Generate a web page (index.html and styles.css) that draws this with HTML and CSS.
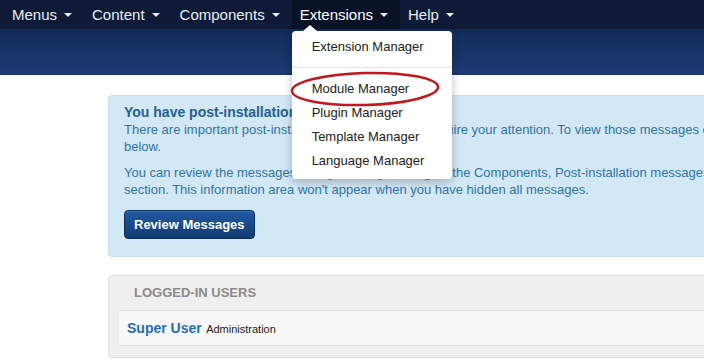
FILE: index.html
```html
<!DOCTYPE html>
<html lang="en">
<head>
    <meta charset="UTF-8">
    <meta name="viewport" content="width=device-width, initial-scale=1.0">
    <title>Control Panel</title>
    <link rel="stylesheet" href="styles.css">
</head>
<body>
    <nav class="navbar">
        <ul class="nav">
            <li><a href="#">Menus <span class="caret"></span></a></li>
            <li><a href="#">Content <span class="caret"></span></a></li>
            <li><a href="#">Components <span class="caret"></span></a></li>
            <li class="open">
                <a href="#">Extensions <span class="caret"></span></a>
                <ul class="dropdown-menu">
                    <li><a href="#">Extension Manager</a></li>
                    <li class="divider"></li>
                    <li><a href="#">Module Manager</a></li>
                    <li><a href="#">Plugin Manager</a></li>
                    <li><a href="#">Template Manager</a></li>
                    <li><a href="#">Language Manager</a></li>
                </ul>
            </li>
            <li><a href="#">Help <span class="caret"></span></a></li>
        </ul>
    </nav>

    <header class="subhead"></header>

    <main class="content">
        <div class="alert-info">
            <h4>You have post-installation messages</h4>
            <p>There are important post-installation messages, that require your attention. To view those messages click on the Review Messages button<br>below.</p>
            <p>You can review the messages at any time, by clicking on the Components, Post-installation messages menu item of your administrator<br>section. This information area won't appear when you have hidden all messages.</p>
            <button class="btn-primary">Review Messages</button>
        </div>

        <div class="well">
            <h2 class="module-title">Logged-in Users</h2>
            <div class="row-user">
                <a href="#" class="user-name">Super User</a>
                <span class="user-client">Administration</span>
            </div>
        </div>
    </main>

    <!-- highlight drawn over the screenshot -->
    <svg class="highlight" width="160" height="44" viewBox="0 0 160 44">
        <ellipse cx="78" cy="21" rx="73" ry="16" fill="none" stroke="#c4161c" stroke-width="2.5" transform="rotate(-1.5 78 21)"/>
    </svg>
</body>
</html>
```

FILE: styles.css
```css
body {
    margin: 0;
    font-family: "Liberation Sans", Arial, sans-serif;
    background-color: #fff;
    overflow: hidden;
}
a {
    text-decoration: none;
}

/* top menu */
.navbar {
    height: 29px;
    background-color: #0f1b36;
    padding-left: 4px;
}
.nav {
    display: flex;
    margin: 0;
    padding: 0;
    list-style: none;
}
.nav > li {
    position: relative;
}
.nav > li > a {
    display: flex;
    align-items: center;
    height: 29px;
    padding: 0 12px 0 8px;
    color: #e9edf4;
    font-size: 15px;
}
.nav > li.open > a {
    background-color: #0a1226;
    color: #fff;
}
.caret {
    width: 0;
    height: 0;
    margin-left: 7px;
    margin-top: 1px;
    border-left: 4px solid transparent;
    border-right: 4px solid transparent;
    border-top: 4px solid #e9edf4;
}

/* dropdown */
.dropdown-menu {
    position: absolute;
    top: 31px;
    left: 0;
    z-index: 10;
    width: 160px;
    margin: 0;
    padding: 4px 0 6px;
    list-style: none;
    background-color: #fff;
    border-radius: 4px;
    box-shadow: 0 3px 10px rgba(0,0,0,0.25);
}
.dropdown-menu::before {
    content: "";
    position: absolute;
    top: -6px;
    left: 11px;
    border-left: 7px solid transparent;
    border-right: 7px solid transparent;
    border-bottom: 6px solid #fff;
}
.dropdown-menu a {
    display: block;
    padding-left: 20px;
    line-height: 24px;
    font-size: 13px;
    color: #222;
}
.dropdown-menu .divider {
    height: 1px;
    margin: 8px 0 9px;
    background-color: #e5e5e5;
}

.subhead {
    height: 46px;
    background: linear-gradient(#122b5b, #1b3b73);
}

/* main area */
.content {
    width: 1000px;
    padding: 20px 0 0 108px;
}
.alert-info {
    background-color: #d2e8f5;
    border: 1px solid #c4e0ef;
    border-radius: 4px;
    padding: 7px 15px 17px;
    color: #2f74a6;
    font-size: 13px;
    margin-bottom: 18px;
}
.alert-info h4 {
    margin: 0;
    font-size: 14px;
    line-height: 18px;
    color: #23628f;
}
.alert-info p {
    margin: 0 0 9px;
    line-height: 17px;
    white-space: nowrap;
}
.btn-primary {
    margin-top: 3px;
    height: 29px;
    padding: 0 9px;
    border: 1px solid #0c2c5a;
    border-radius: 4px;
    background: linear-gradient(#1f5aa0, #123b74);
    color: #fff;
    font-family: inherit;
    font-size: 13px;
    font-weight: bold;
    box-shadow: inset 0 1px 0 rgba(255,255,255,0.15);
}

.well {
    background-color: #efefef;
    border: 1px solid #dedede;
    border-radius: 4px;
    padding: 0 0 11px 10px;
}
.module-title {
    margin: 0;
    padding-left: 15px;
    height: 34px;
    line-height: 34px;
    font-size: 13px;
    font-weight: bold;
    color: #8a8a8a;
    text-transform: uppercase;
}
.row-user {
    height: 34px;
    line-height: 34px;
    padding-left: 8px;
    background-color: #f7f7f7;
    border-top: 1px solid #dcdcdc;
    border-bottom: 1px solid #dcdcdc;
}
.user-name {
    font-size: 14px;
    font-weight: bold;
    color: #1f6fb7;
}
.user-client {
    font-size: 11px;
    color: #222;
}

.highlight {
    position: absolute;
    left: 287px;
    top: 68px;
    z-index: 20;
}
```
